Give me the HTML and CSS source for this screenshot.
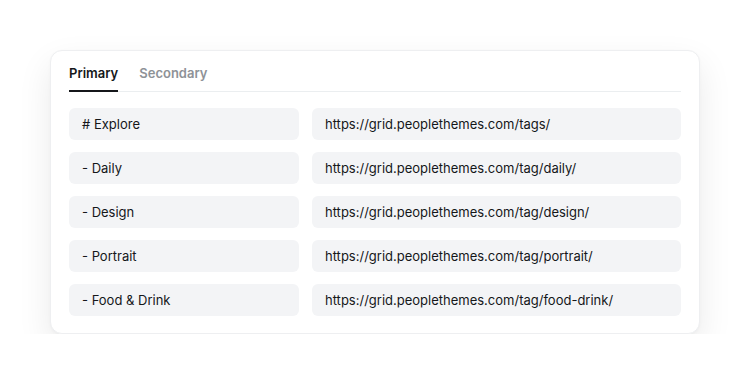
FILE: index.html
```html
<!DOCTYPE html>
<html lang="en">
<head>
    <meta charset="UTF-8">
    <meta name="viewport" content="width=device-width, initial-scale=1.0">
    <title>Navigation</title>
    <link rel="stylesheet" href="styles.css">
</head>
<body>

<div class="card">
    <div class="tabs">
        <div class="tab active">Primary</div>
        <div class="tab">Secondary</div>
    </div>

    <div class="rows">
        <div class="row">
            <div class="field label">&#35; Explore</div>
            <div class="field url">https://grid.peoplethemes.com/tags/</div>
        </div>
        <div class="row">
            <div class="field label">- Daily</div>
            <div class="field url">https://grid.peoplethemes.com/tag/daily/</div>
        </div>
        <div class="row">
            <div class="field label">- Design</div>
            <div class="field url">https://grid.peoplethemes.com/tag/design/</div>
        </div>
        <div class="row">
            <div class="field label">- Portrait</div>
            <div class="field url">https://grid.peoplethemes.com/tag/portrait/</div>
        </div>
        <div class="row">
            <div class="field label">- Food &amp; Drink</div>
            <div class="field url">https://grid.peoplethemes.com/tag/food-drink/</div>
        </div>
    </div>
</div>

</body>
</html>
```

FILE: styles.css
```css
body {
    font-family: Inter, "Noto Sans", sans-serif;
    background-color: #ffffff;
    color: #15171a;
    margin: 0;
    padding: 50px 0 0 50px;
}
.card {
    width: 612px;
    padding: 14px 18px 17px 18px;
    background-color: #ffffff;
    border: 1px solid #eeeff1;
    border-radius: 12px;
    box-shadow: 0 14px 34px rgba(0, 0, 0, 0.085), 0 1px 3px rgba(0, 0, 0, 0.03);
}
.tabs {
    display: flex;
    gap: 21px;
    border-bottom: 1px solid #ebeef0;
}
.tab {
    font-size: 13px;
    font-weight: 600;
    line-height: 16px;
    padding: 0 0 9px 0;
    margin-bottom: -1px;
    color: #8e9297;
    border-bottom: 2px solid transparent;
}
.tab.active {
    color: #15171a;
    border-bottom-color: #15171a;
}
.rows {
    display: flex;
    flex-direction: column;
    gap: 12px;
    margin-top: 16px;
}
.row {
    display: flex;
    gap: 13px;
}
.field {
    height: 32px;
    line-height: 32px;
    padding: 0 13px;
    box-sizing: border-box;
    background-color: #f3f4f6;
    border-radius: 6px;
    font-size: 13px;
}
.label {
    width: 230px;
}
.url {
    flex: 1;
}
```
